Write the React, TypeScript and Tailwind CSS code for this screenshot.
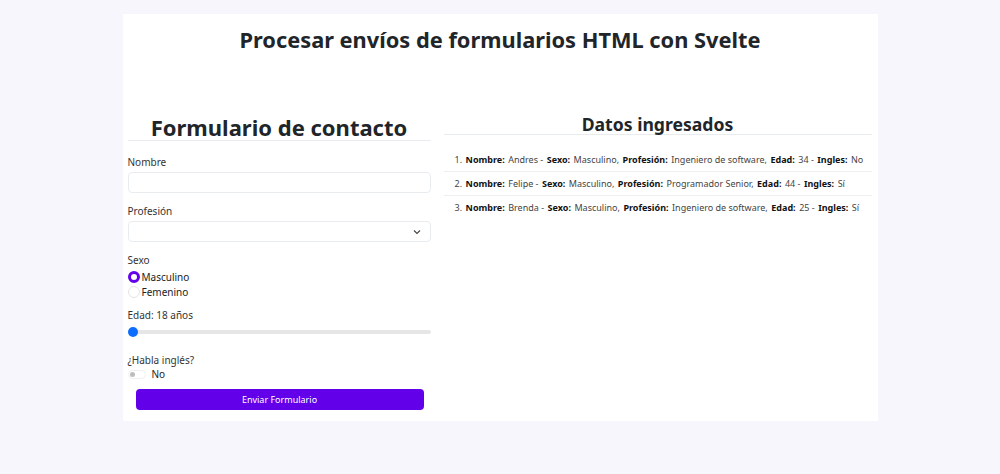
import { useState } from 'react';

const ENTRIES = [
  { nombre: 'Andres', sexo: 'Masculino', profesion: 'Ingeniero de software', edad: 34, ingles: 'No' },
  { nombre: 'Felipe', sexo: 'Masculino', profesion: 'Programador Senior', edad: 44, ingles: 'Sí' },
  { nombre: 'Brenda', sexo: 'Masculino', profesion: 'Ingeniero de software', edad: 25, ingles: 'Sí' },
];

export default function App() {
  const [sexo, setSexo] = useState('Masculino');
  const [edad, setEdad] = useState(18);

  return (
    <div className="min-h-screen bg-[#f6f6fc] pt-[14px] font-['Noto_Sans',sans-serif] text-[#222]">
      <div className="mx-auto w-[755px] h-[407px] bg-white px-[5px]">
        {/* Title */}
        <h1 className="pt-[11px] text-center text-[21.8px] leading-[30px] font-bold text-[#212529]">
          Procesar envíos de formularios HTML con Svelte
        </h1>

        <div className="mt-[59px] flex items-start gap-[13px]">
          {/* Form */}
          <div className="w-[303px]">
            <h2 className="border-b border-[#e9ecef] text-center text-[22px] leading-[26px] font-bold text-[#212529]">
              Formulario de contacto
            </h2>

            <label className="mt-[14px] block text-[10px] leading-[14px] text-[#333]">Nombre</label>
            <input className="mt-[3px] block h-[21px] w-full rounded border border-[#e9ecef] px-2 text-[10px] outline-none" />

            <label className="mt-[11px] block text-[10px] leading-[14px] text-[#333]">Profesión</label>
            <div className="relative mt-[3px] h-[21px] w-full rounded border border-[#e9ecef]">
              <svg className="absolute right-[9px] top-[7px] h-[6px] w-[8px]" viewBox="0 0 8 6" fill="none" stroke="#444" strokeWidth="1.1">
                <path d="M1 1.5 4 4.5 7 1.5" />
              </svg>
            </div>

            <div className="mt-[11px] text-[10px] leading-[14px] text-[#333]">Sexo</div>
            <div className="mt-[3px] flex flex-col gap-[1px]">
              {['Masculino', 'Femenino'].map((s) => (
                <label key={s} className="flex items-center gap-[2px] text-[10px] leading-[14px] text-[#222]" onClick={() => setSexo(s)}>
                  <span
                    className={`h-[12px] w-[12px] rounded-full ${
                      sexo === s ? 'border-[3px] border-[#6200ea] bg-white' : 'border border-[#e5e5e5] bg-white'
                    }`}
                  />
                  {s}
                </label>
              ))}
            </div>

            <div className="mt-[9px] text-[10px] leading-[14px] text-[#333]">Edad: {edad} años</div>
            <div className="relative mt-[4px] flex h-[12px] items-center">
              <div className="h-[4px] w-full rounded bg-[#e6e6e6]" />
              <span className="absolute left-0 top-[1px] h-[10px] w-[10px] rounded-full bg-[#0d6efd]" onClick={() => setEdad(edad)} />
            </div>

            <div className="mt-[15px] text-[10px] leading-[14px] text-[#333]">¿Habla inglés?</div>
            <div className="flex items-center gap-[6px]">
              <span className="relative h-[9px] w-[18px] rounded-full border border-[#f0f0f0] bg-white">
                <span className="absolute left-[1px] top-[1px] h-[5px] w-[5px] rounded-full bg-[#bdbdbd]" />
              </span>
              <span className="text-[10px] leading-[14px] text-[#222]">No</span>
            </div>

            <button className="ml-[8px] mt-[8px] h-[21px] w-[288px] rounded bg-[#6200ea] text-[9px] text-white">
              Enviar Formulario
            </button>
          </div>

          {/* Datos */}
          <div className="w-[428px]">
            <h2 className="border-b border-[#e9ecef] text-center text-[17.6px] leading-[20px] font-bold text-[#212529]">
              Datos ingresados
            </h2>
            <ol className="mt-[13px]">
              {ENTRIES.map((e, i) => (
                <li
                  key={i}
                  className={`flex h-[24px] items-center gap-[3.5px] pl-[11px] text-[9px] text-[#444] ${
                    i < ENTRIES.length - 1 ? 'border-b border-[#eeeeee]' : ''
                  }`}
                >
                  <span>{i + 1}.</span>
                  <b className="text-[#111]">Nombre:</b> {e.nombre} - <b className="text-[#111]">Sexo:</b> {e.sexo},{' '}
                  <b className="text-[#111]">Profesión:</b> {e.profesion}, <b className="text-[#111]">Edad:</b> {e.edad} -{' '}
                  <b className="text-[#111]">Ingles:</b> {e.ingles}
                </li>
              ))}
            </ol>
          </div>
        </div>
      </div>
    </div>
  );
}
